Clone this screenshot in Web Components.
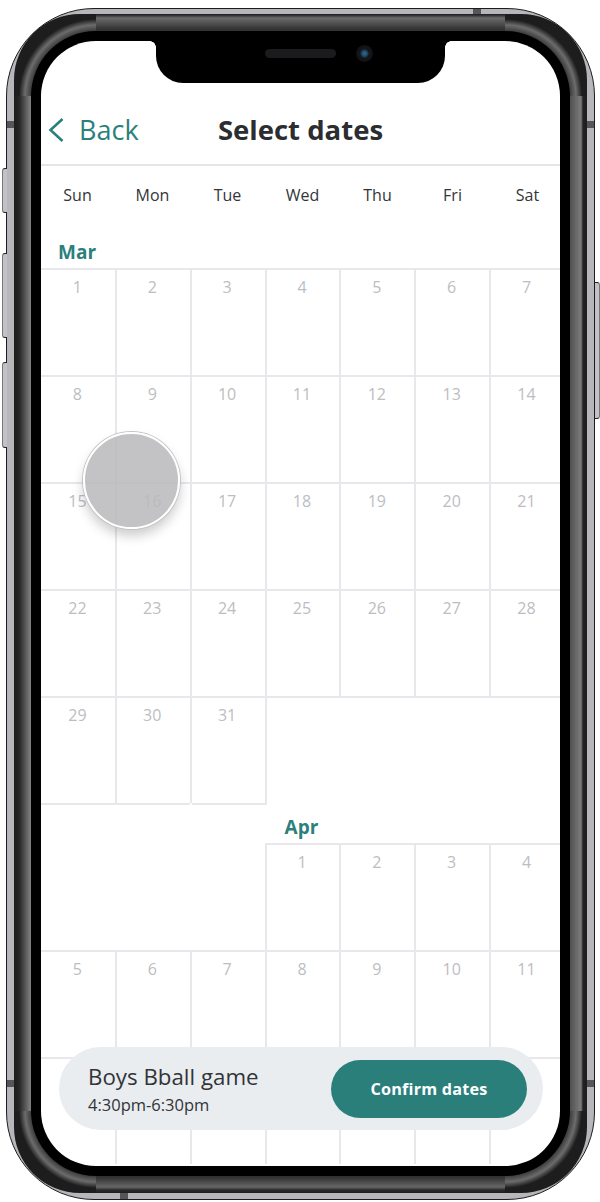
<!DOCTYPE html>
<html>
<head>
<meta charset="utf-8">
<title>Select dates</title>
<style>
html, body { margin: 0; padding: 0; background: #fff; }
body { font-family: "Open Sans", sans-serif; }
</style>
</head>
<body>
<phone-frame>
  <nav-header title="Select dates" back="Back"></nav-header>
  <week-days></week-days>
  <cal-month name="Mar" start="0" days="31"></cal-month>
  <cal-month name="Apr" start="3" days="18" numbered="11" open></cal-month>
  <touch-dot></touch-dot>
  <event-bar title="Boys Bball game" time="4:30pm-6:30pm" action="Confirm dates"></event-bar>
</phone-frame>

<script>
class phoneFrame extends HTMLElement {
  constructor() {
    super();
    this.attachShadow({ mode: "open" });
  }

  connectedCallback() {
    this.shadowRoot.innerHTML = `
    <style>
:host {
  display: block;
  position: relative;
  box-sizing: border-box;
  width: 600px;
  height: 1202px;
  padding: 8px 5px 2px 6px;
  overflow: hidden;
}
.device {
  box-sizing: border-box;
  height: 100%;
  padding: 5px 7px 6px 7px;
  border: 1px solid #1c1c1c;
  border-radius: 88px;
  background: #b7b7bb;
}
.band {
  box-sizing: border-box;
  height: 100%;
  padding: 17px;
  border-radius: 66px;
  background-repeat: no-repeat;
  background-color: #1d1d1d;
  background-image:
    linear-gradient(to right, #1d1d1d 0, #242424 5px, #7c7c7c 16px),
    linear-gradient(to left, #1d1d1d 0, #222 4px, #7c7c7c 6px, #505050 17px),
    linear-gradient(to bottom, #222 0, #2a2a2a 1px, #6c6c6c 4px, #333 15px),
    linear-gradient(to top, #1d1d1d 0, #2a2a2a 3px, #666 6px, #303030 16px),
    radial-gradient(circle at 100% 100%, #3c3c3c 65px, #6c6c6c 71px, #1d1d1d 77px),
    radial-gradient(circle at 0 100%, #3c3c3c 65px, #6c6c6c 71px, #1d1d1d 77px),
    radial-gradient(circle at 100% 0, #3c3c3c 65px, #6c6c6c 71px, #1d1d1d 77px),
    radial-gradient(circle at 0 0, #3c3c3c 65px, #6c6c6c 71px, #1d1d1d 77px);
  background-position:
    0 82px, 100% 82px, 82px 0, 82px 100%,
    0 0, 100% 0, 0 100%, 100% 100%;
  background-size:
    17px calc(100% - 164px), 17px calc(100% - 164px),
    calc(100% - 164px) 17px, calc(100% - 164px) 17px,
    82px 82px, 82px 82px, 82px 82px, 82px 82px;
}
.bezel {
  box-sizing: border-box;
  height: 100%;
  padding: 10px;
  border-radius: 65px;
  background: #000;
}
.screen {
  position: relative;
  height: 100%;
  overflow: hidden;
  border-radius: 55px;
  background: #fff;
}
.notch {
  position: absolute;
  top: 41px;
  left: 156px;
  width: 289px;
  height: 42px;
  background: #000;
  border-radius: 0 0 27px 27px;
}
.notch::before, .notch::after {
  content: "";
  position: absolute;
  top: 0;
  width: 6px;
  height: 6px;
}
.notch::before {
  left: -6px;
  background: radial-gradient(circle at 0 100%, transparent 5.5px, #000 6px);
}
.notch::after {
  right: -6px;
  background: radial-gradient(circle at 100% 100%, transparent 5.5px, #000 6px);
}
.speaker {
  position: absolute;
  top: 8px;
  left: 109px;
  width: 71px;
  height: 9px;
  border-radius: 5px;
  background: #1b1b1d;
}
.camera {
  position: absolute;
  top: 4px;
  left: 200px;
  width: 17px;
  height: 17px;
  border-radius: 50%;
  background: radial-gradient(circle, #2f6f9c 0, #1d4460 3px, #15181c 4.5px, #101114 8px);
}
.seam { position: absolute; background: #55555a; }
.key {
  position: absolute;
  box-sizing: border-box;
  width: 5px;
  border: 1px solid #222;
  background: #c2c2c6;
}
.key.left { left: 2px; border-left-color: #77777a; border-right: 0; border-radius: 3px 0 0 3px; }
.key.right { left: 595px; border-right-color: #77777a; border-left: 0; border-radius: 0 3px 3px 0; }
    </style>

    <div class="device">
      <div class="band">
        <div class="bezel">
          <div class="screen"><slot></slot></div>
        </div>
      </div>
    </div>

    <div class="notch"><div class="speaker"></div><div class="camera"></div></div>

    <div class="seam" style="left:7px;top:121px;width:7px;height:7px"></div>
    <div class="seam" style="left:587px;top:121px;width:7px;height:7px"></div>
    <div class="seam" style="left:7px;top:1080px;width:7px;height:7px"></div>
    <div class="seam" style="left:587px;top:1080px;width:7px;height:7px"></div>
    <div class="seam" style="left:473px;top:9px;width:8px;height:5px"></div>
    <div class="seam" style="left:120px;top:1193px;width:8px;height:6px"></div>

    <div class="key left" style="top:168px;height:45px"></div>
    <div class="key left" style="top:253px;height:85px"></div>
    <div class="key left" style="top:362px;height:86px"></div>
    <div class="key right" style="top:282px;height:137px"></div>
    `;
  }
}

class navHeader extends HTMLElement {
  constructor() {
    super();
    this.attachShadow({ mode: "open" });
  }

  connectedCallback() {
    const title = this.getAttribute("title");
    const back = this.getAttribute("back");

    this.shadowRoot.innerHTML = `
    <style>
:host {
  display: grid;
  grid-template-columns: 1fr auto 1fr;
  align-items: center;
  box-sizing: border-box;
  height: 125px;
  padding-top: 54px;
  border-bottom: 2px solid #e6e6ea;
}
.back {
  display: flex;
  align-items: center;
  gap: 15px;
  padding-left: 7px;
  color: #2b807c;
  font-size: 27px;
  font-weight: 400;
}
.back svg { display: block; }
.title {
  color: #2b2d30;
  font-size: 27.5px;
  font-weight: 700;
}
    </style>
    <div class="back">
      <svg width="16" height="26" viewBox="0 0 16 26" fill="none" stroke="#2b807c" stroke-width="2.6">
        <path d="M14.5 2 L2.5 13 L14.5 24"/>
      </svg>
      <span>${back}</span>
    </div>
    <div class="title">${title}</div>
    <div></div>
    `;
  }
}

class weekDays extends HTMLElement {
  constructor() {
    super();
    this.attachShadow({ mode: "open" });
  }

  connectedCallback() {
    const names = ["Sun", "Mon", "Tue", "Wed", "Thu", "Fri", "Sat"];

    this.shadowRoot.innerHTML = `
    <style>
:host {
  display: grid;
  grid-template-columns: repeat(7, 75px);
  align-items: center;
  box-sizing: border-box;
  height: 62px;
  margin-left: -1px;
  padding-bottom: 4px;
  color: #333538;
  font-size: 16px;
  text-align: center;
}
    </style>
    ${names.map((n) => `<div>${n}</div>`).join("")}
    `;
  }
}

class calMonth extends HTMLElement {
  constructor() {
    super();
    this.attachShadow({ mode: "open" });
  }

  connectedCallback() {
    const name = this.getAttribute("name");
    const start = Number(this.getAttribute("start"));
    const days = Number(this.getAttribute("days"));
    const numbered = Number(this.getAttribute("numbered")) || days;
    const open = this.hasAttribute("open");

    let cells = "";
    for (let d = 1; d <= days; d++) {
      const col = (start + d - 1) % 7;
      const cls = ["day"];
      if (col > 0) cls.push("line-left");
      if (!open && d > days - 7) cls.push("line-bottom");
      if (!open && d === days) cls.push("line-right");
      const place = d === 1 ? ` style="grid-column-start:${start + 1}"` : "";
      // the last week sits behind the event bar, its numbers don't show
      cells += `<div class="${cls.join(" ")}"${place}>${d <= numbered ? d : ""}</div>`;
    }

    this.shadowRoot.innerHTML = `
    <style>
:host {
  display: grid;
  grid-template-columns: repeat(7, 74.85px);
  grid-auto-rows: 107px;
  grid-template-rows: 40px;
  margin-left: -1px;
}
.label {
  grid-column: ${start + 1} / 8;
  padding: 5px 0 0 ${start > 0 ? 20 : 18}px;
  color: #2b807c;
  font-size: 19px;
  font-weight: 700;
  line-height: 38px;
}
.day {
  box-sizing: border-box;
  padding-top: 5px;
  border-top: 2px solid #e8e8ec;
  color: #bdbdc1;
  font-size: 16px;
  line-height: 24px;
  text-align: center;
}
.line-left { border-left: 2px solid #e8e8ec; padding-right: 2px; }
.line-bottom { box-shadow: 0 2px 0 #e8e8ec; }
.line-bottom.line-right { box-shadow: 2px 2px 0 #e8e8ec; }
    </style>
    <div class="label">${name}</div>
    ${cells}
    `;
  }
}

class touchDot extends HTMLElement {
  constructor() {
    super();
    this.attachShadow({ mode: "open" });
  }

  connectedCallback() {
    this.shadowRoot.innerHTML = `
    <style>
:host {
  position: absolute;
  left: 42px;
  top: 391px;
  box-sizing: border-box;
  width: 97px;
  height: 97px;
  border: 2px solid #fff;
  border-radius: 50%;
  background: rgba(185, 185, 187, 0.86);
  box-shadow: 0 0 0 1px #c4c4c6, 0 7px 12px rgba(0, 0, 0, 0.2);
}
    </style>
    `;
  }
}

class eventBar extends HTMLElement {
  constructor() {
    super();
    this.attachShadow({ mode: "open" });
  }

  connectedCallback() {
    const title = this.getAttribute("title");
    const time = this.getAttribute("time");
    const action = this.getAttribute("action");

    this.shadowRoot.innerHTML = `
    <style>
:host {
  position: absolute;
  left: 18px;
  top: 1006px;
  box-sizing: border-box;
  display: flex;
  align-items: center;
  justify-content: space-between;
  width: 484px;
  height: 83px;
  padding: 1px 16px 0 29px;
  border-radius: 42px;
  background: #e9edf0;
}
.info { color: #323438; }
.name { font-size: 22.3px; line-height: 30px; }
.time { margin-top: 2px; font-size: 16.5px; line-height: 22px; }
.confirm {
  display: flex;
  align-items: center;
  justify-content: center;
  width: 196px;
  height: 58px;
  border-radius: 29px;
  background: #2b7f7b;
  color: #fff;
  font-size: 16.2px;
  font-weight: 700;
  letter-spacing: 0.2px;
}
    </style>
    <div class="info">
      <div class="name">${title}</div>
      <div class="time">${time}</div>
    </div>
    <div class="confirm">${action}</div>
    `;
  }
}

customElements.define("phone-frame", phoneFrame);
customElements.define("nav-header", navHeader);
customElements.define("week-days", weekDays);
customElements.define("cal-month", calMonth);
customElements.define("touch-dot", touchDot);
customElements.define("event-bar", eventBar);
</script>
</body>
</html>
